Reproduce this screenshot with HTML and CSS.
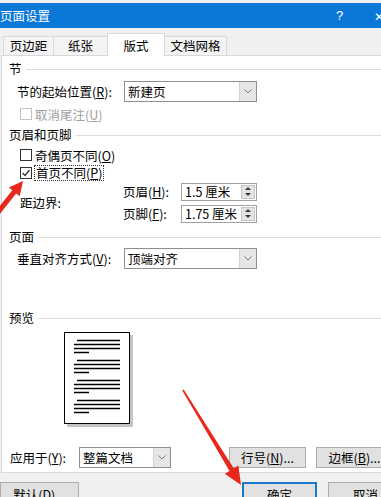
FILE: index.html
```html
<!DOCTYPE html>
<html lang="zh-CN">
  <head>
    <meta charset="UTF-8" />
    <meta name="viewport" content="width=device-width, initial-scale=1.0" />
    <title>页面设置</title>
    <link rel="stylesheet" href="styles.css">
  </head>
  <body>
    <div class="dialog">
      <div class="titlebar">
        <span class="title">页面设置</span>
        <span class="help">?</span>
        <span class="close">✕</span>
      </div>

      <div class="tabs">
        <div class="tab tab-1">页边距</div>
        <div class="tab tab-2">纸张</div>
        <div class="tab tab-3 active">版式</div>
        <div class="tab tab-4">文档网格</div>
      </div>

      <div class="panel">
        <div class="group group-section"><span>节</span></div>
        <div class="row row-start">
          <span class="lbl lbl-start">节的起始位置(<u>R</u>):</span>
          <div class="combo combo-wide">
            <span class="combo-text">新建页</span>
            <span class="drop"><svg width="8" height="5" viewBox="0 0 8 5"><path d="M0.5 0.5 L4 4 L7.5 0.5" fill="none" stroke="#777" stroke-width="1"/></svg></span>
          </div>
        </div>
        <label class="check disabled row-endnote">
          <span class="box"></span>取消尾注(<u>U</u>)
        </label>

        <div class="group group-header"><span>页眉和页脚</span></div>
        <label class="check row-odd">
          <span class="box"></span>奇偶页不同(<u>O</u>)
        </label>
        <label class="check row-first">
          <span class="box"><svg width="10" height="10" viewBox="0 0 10 10"><path d="M1.5 5 L4 7.5 L8.5 2" fill="none" stroke="#333" stroke-width="1.3"/></svg></span><span class="focus">首页不同(<u>P</u>)</span>
        </label>
        <div class="edge">
          <span class="edge-lbl">距边界:</span>
          <div class="spins">
            <span class="spin-lbl">页眉(<u>H</u>):</span>
            <div class="spin"><span class="spin-text">1.5 厘米</span><span class="arrows"><i class="up"></i><i class="down"></i></span></div>
            <span class="spin-lbl">页脚(<u>F</u>):</span>
            <div class="spin"><span class="spin-text">1.75 厘米</span><span class="arrows"><i class="up"></i><i class="down"></i></span></div>
          </div>
        </div>

        <div class="group group-page"><span>页面</span></div>
        <div class="row row-valign">
          <span class="lbl lbl-valign">垂直对齐方式(<u>V</u>):</span>
          <div class="combo combo-wide">
            <span class="combo-text">顶端对齐</span>
            <span class="drop"><svg width="8" height="5" viewBox="0 0 8 5"><path d="M0.5 0.5 L4 4 L7.5 0.5" fill="none" stroke="#777" stroke-width="1"/></svg></span>
          </div>
        </div>

        <div class="group group-preview"><span>预览</span></div>
        <div class="preview">
          <svg width="70" height="96" viewBox="0 0 70 96">
            <rect x="3" y="3" width="66" height="92" fill="#c4c4c4"/>
            <rect x="0.5" y="0.5" width="65" height="91" fill="#fff" stroke="#000"/>
            <g stroke="#000" stroke-width="1.4">
              <path d="M13 8.5 H56 M10 12.5 H56 M10 16.5 H56 M10 20.5 H25"/>
              <path d="M13 28.5 H56 M10 32.5 H56 M10 36.5 H56 M10 40.5 H25"/>
              <path d="M13 48.5 H56 M10 52.5 H56 M10 56.5 H56 M10 60.5 H25"/>
              <path d="M13 68.5 H56 M10 72.5 H56 M10 76.5 H56 M10 80.5 H25"/>
            </g>
          </svg>
        </div>

        <div class="row row-apply">
          <span class="lbl lbl-apply">应用于(<u>Y</u>):</span>
          <div class="combo combo-apply">
            <span class="combo-text">整篇文档</span>
            <span class="drop"><svg width="8" height="5" viewBox="0 0 8 5"><path d="M0.5 0.5 L4 4 L7.5 0.5" fill="none" stroke="#777" stroke-width="1"/></svg></span>
          </div>
          <button class="btn btn-lines">行号(<u>N</u>)...</button>
          <button class="btn btn-border">边框(<u>B</u>)...</button>
        </div>
      </div>

      <div class="footer">
        <button class="btn btn-default">默认(<u>D</u>)...</button>
        <button class="btn btn-ok">确定</button>
        <button class="btn btn-cancel">取消</button>
      </div>

      <svg class="marks" width="381" height="497" viewBox="0 0 381 497">
        <polygon fill="#e8281c" points="-3,214.6 16.2,190.5 19.7,193.3 23,178 8.8,184.5 12.3,187.3 -7,211.4"/>
        <polygon fill="#e8281c" points="183.7,386.6 233.7,465.3 238.4,462.4 241,482 224.8,470.8 229.5,467.9 182.3,387.4"/>
      </svg>
    </div>
  </body>
</html>
```

FILE: styles.css
```css
body {
  margin: 0;
  width: 381px;
  height: 497px;
  overflow: hidden;
  background-color: #f0f0f0;
  font-family: "Noto Sans CJK SC", "DejaVu Sans", sans-serif;
  font-size: 12.5px;
  color: #000;
}
u {
  text-decoration: underline;
}
.dialog {
  position: relative;
  width: 440px;
  height: 497px;
}
.titlebar {
  margin-top: 3px;
  height: 25px;
  background-color: #0b78d7;
  color: #fff;
  display: grid;
  grid-template-columns: 336px 38px auto;
  align-items: center;
  line-height: 25px;
}
.help {
  font-family: "Liberation Sans", sans-serif;
  font-size: 13px;
}
.close {
  font-size: 12px;
}

/* tabs */
.tabs {
  display: flex;
  align-items: flex-end;
  margin-top: 5px;
  height: 22px;
  padding-left: 3px;
}
.tab {
  box-sizing: border-box;
  height: 19px;
  line-height: 18px;
  text-align: center;
  border: 1px solid #d9d9d9;
  border-bottom: none;
  background-color: #f4f4f4;
}
.tab-1 { width: 51px; }
.tab-2 { width: 55px; margin-left: -1px; }
.tab-3 { width: 58px; margin-left: -1px; }
.tab-4 { width: 63px; margin-left: -1px; }
.tab.active {
  height: 23px;
  line-height: 24px;
  margin-bottom: -1px;
  background-color: #fff;
  position: relative;
  z-index: 1;
}

/* panel */
.panel {
  box-sizing: border-box;
  margin-left: 1px;
  width: 440px;
  height: 418px;
  border: 1px solid #d9d9d9;
  background-color: #fff;
}
.group {
  display: flex;
  align-items: center;
  gap: 4px;
  height: 14px;
  line-height: 14px;
  padding-left: 7px;
}
.group::after {
  content: "";
  flex: 1;
  height: 1px;
  background-color: #dcdcdc;
}
.group-section { margin-top: 6px; }
.group-header { margin-top: 6px; }
.group-page { margin-top: 8px; }
.group-preview { margin-top: 42px; }

.row {
  display: flex;
  align-items: center;
  height: 21px;
}
.lbl {
  white-space: nowrap;
}
.row-start { margin-top: 5px; }
.row-valign { margin-top: 4px; }
.row-apply { margin-top: 19px; }
.lbl-start, .lbl-valign {
  box-sizing: border-box;
  width: 122px;
  padding-left: 15px;
}
.lbl-apply {
  box-sizing: border-box;
  width: 77px;
  padding-left: 8px;
}

.combo {
  box-sizing: border-box;
  height: 21px;
  border: 1px solid #8f8f8f;
  display: flex;
  align-items: stretch;
  background-color: #fff;
}
.combo-wide { width: 133px; }
.combo-apply { width: 92px; }
.combo-text {
  flex: 1;
  padding-left: 3px;
  line-height: 19px;
}
.drop {
  width: 16px;
  background-color: #e6e6e6;
  border-left: 1px solid #d0d0d0;
  display: flex;
  align-items: center;
  justify-content: center;
}

/* checkboxes */
.check {
  display: flex;
  align-items: center;
  height: 16px;
  padding-left: 18px;
  white-space: nowrap;
}
.check .box {
  box-sizing: border-box;
  width: 12px;
  height: 12px;
  border: 1px solid #333;
  background-color: #fff;
  margin-right: 3px;
  display: flex;
  align-items: center;
  justify-content: center;
}
.check.disabled {
  color: #a0a0a0;
}
.check.disabled .box {
  border-color: #c4c4c4;
}
.row-endnote { margin-top: 4px; }
.row-odd { margin-top: 5px; }
.row-first { margin-top: 2px; }
.focus {
  border: 1px dotted #333;
  line-height: 14px;
  padding: 0 1px;
  margin-left: -1px;
}

/* header / footer distance */
.edge {
  display: flex;
  align-items: center;
  margin-top: 2px;
  height: 39px;
}
.edge-lbl {
  box-sizing: border-box;
  width: 121px;
  padding-left: 18px;
}
.spins {
  display: grid;
  grid-template-columns: 58px 76px;
  row-gap: 3px;
  align-items: center;
}
.spin {
  box-sizing: border-box;
  height: 18px;
  border: 1px solid #a0a0a0;
  display: flex;
  align-items: stretch;
}
.spin-text {
  flex: 1;
  padding-left: 3px;
  line-height: 16px;
  white-space: nowrap;
}
.arrows {
  width: 14px;
  margin: 1px 1px 1px 0;
  display: flex;
  flex-direction: column;
  background-color: #e4e4e4;
  border: 1px solid #c6c6c6;
  box-sizing: border-box;
}
.arrows i {
  flex: 1;
  display: flex;
  align-items: center;
  justify-content: center;
}
.arrows .up::before {
  content: "";
  border-left: 3px solid transparent;
  border-right: 3px solid transparent;
  border-bottom: 3px solid #333;
}
.arrows .down::before {
  content: "";
  border-left: 3px solid transparent;
  border-right: 3px solid transparent;
  border-top: 3px solid #333;
}

/* preview */
.preview {
  margin-top: 7px;
  padding-left: 62px;
  height: 96px;
}
.preview svg {
  display: block;
}

/* buttons */
.btn {
  box-sizing: border-box;
  height: 21px;
  border: 1px solid #adadad;
  background-color: #e1e1e1;
  font-family: inherit;
  font-size: 12.5px;
  padding: 0;
  color: #000;
  white-space: nowrap;
}
.btn-lines {
  width: 77px;
  margin-left: 58px;
}
.btn-border {
  width: 77px;
  margin-left: 10px;
}
.footer {
  display: flex;
  margin-top: 9px;
}
.footer .btn {
  height: 24px;
}
.btn-default {
  width: 79px;
}
.btn-ok {
  width: 75px;
  margin-left: 163px;
  border: 2px solid #1a78c8;
}
.btn-cancel {
  width: 75px;
  margin-left: 11px;
}

.marks {
  position: absolute;
  top: 0;
  left: 0;
  pointer-events: none;
}
```
